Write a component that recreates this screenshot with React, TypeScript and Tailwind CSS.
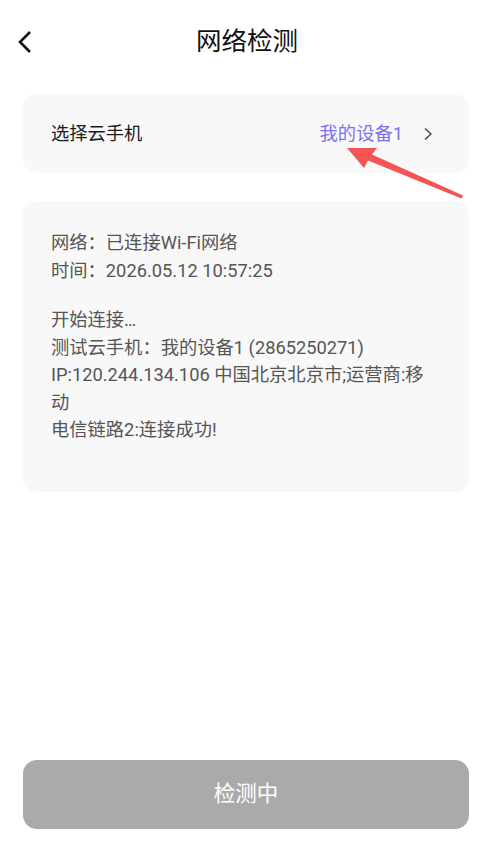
import React from "react";

export default function App() {
  const font = { fontFamily: "Roboto, 'Noto Sans CJK SC', sans-serif" };
  return (
    <div className="relative w-[494px] h-[854px] bg-white flex flex-col" style={font}>
      <div className="relative h-[85px] flex items-center justify-center">
        <button className="absolute left-[14px] top-[28px] w-[22px] h-[28px] flex items-center justify-center">
          <svg width="16" height="24" viewBox="0 0 16 24" fill="none">
            <path d="M13 2 L3 12 L13 22" stroke="#111" strokeWidth="2.6" strokeLinecap="butt" strokeLinejoin="miter" />
          </svg>
        </button>
        <div className="text-[25.5px] text-[#111] leading-none -mt-[1px]">网络检测</div>
      </div>

      <div className="ml-[23px] mr-[25px] mt-[9px] h-[79px] rounded-[14px] bg-[#f8f8f8] flex items-center pl-[28px] pr-[36px]">
        <div className="text-[18.3px] text-[#1a1a1a]">选择云手机</div>
        <div className="ml-auto flex items-center">
          <span className="text-[18.3px] text-[#7b70f0]">我的设备1</span>
          <svg className="ml-[20px]" width="10" height="14" viewBox="0 0 10 14" fill="none">
            <path d="M2 1.5 L8 7 L2 12.5" stroke="#444" strokeWidth="1.4" />
          </svg>
        </div>
      </div>

      <div className="ml-[23px] mr-[25px] mt-[28px] h-[291px] rounded-[14px] bg-[#f8f8f8] pl-[28px] pr-[32px] pt-[28px] text-[18.3px] leading-[27.5px] text-[#555]">
        <div>网络：已连接Wi-Fi网络</div>
        <div>时间：2026.05.12 10:57:25</div>
        <div className="mt-[22px]">
          <div>开始连接…</div>
          <div>测试云手机：我的设备1 (2865250271)</div>
          <div>IP:120.244.134.106 中国北京北京市;运营商:移动</div>
          <div>电信链路2:连接成功!</div>
        </div>
      </div>

      <div className="mt-auto mb-[25px] ml-[23px] mr-[25px] h-[69px] rounded-[14px] bg-[#aaaaaa] flex items-center justify-center">
        <span className="text-[21.5px] text-white">检测中</span>
      </div>

      <svg className="absolute left-0 top-0 pointer-events-none" width="494" height="854" viewBox="0 0 494 854">
        <polygon points="347,148 377,148 372,154.5 463,195.5 461.5,198.5 368,160.5 364,168" fill="#f45454" />
      </svg>
    </div>
  );
}
